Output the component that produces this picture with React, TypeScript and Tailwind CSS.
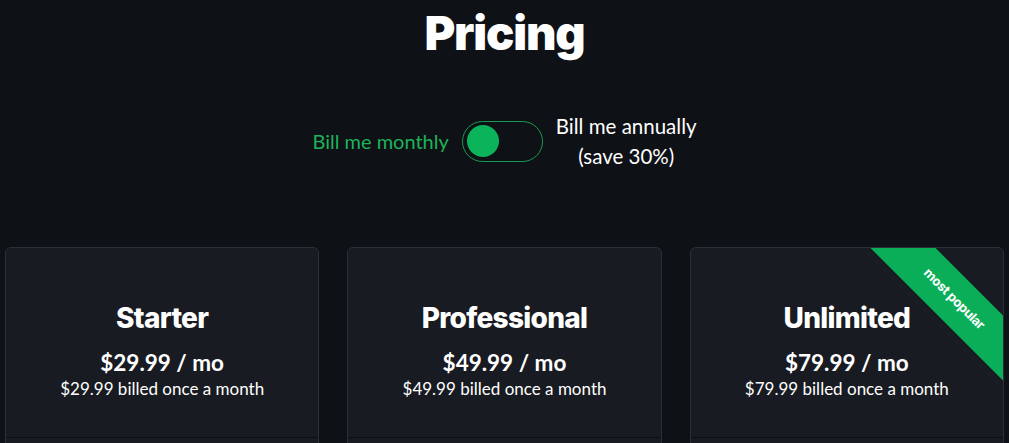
const plans = [
  { name: "Starter", price: "$29.99" },
  { name: "Professional", price: "$49.99" },
  { name: "Unlimited", price: "$79.99", popular: true },
];

function PlanCard(props: { name: string; price: string; popular?: boolean }) {
  const { name, price, popular } = props;
  return (
    <div className="relative overflow-hidden rounded-md border border-[#2b2f36] bg-[#181b21] text-white">
      {popular && (
        <div className="absolute left-[163px] top-[28px] flex h-[46px] w-[200px] rotate-45 items-center justify-center bg-[#0bae58]">
          <span className="font-['Inter',sans-serif] text-[13px] font-bold tracking-tight">most popular</span>
        </div>
      )}
      <div className="flex h-[190px] flex-col items-center border-b border-[#0c0e12] pt-[51px]">
        <h2 className="font-['Inter',sans-serif] text-[28px] leading-[38px] font-extrabold tracking-tight">{name}</h2>
        <p className="mt-[12px] font-['Lato',sans-serif] text-[22.5px] leading-[28px] font-bold">{price} / mo</p>
        <p className="mt-[1px] font-['Lato',sans-serif] text-[17px] leading-[22px]">{price} billed once a month</p>
      </div>
      <div className="h-[60px]" />
    </div>
  );
}

export default function App() {
  return (
    <div className="min-h-screen overflow-hidden bg-[#0e1116]">
      <h1 className="pt-[2px] text-center font-['Inter',sans-serif] text-[47px] leading-[62px] font-black tracking-tight text-white">
        Pricing
      </h1>

      <div className="mt-[47px] flex items-center justify-center gap-[13px] font-['Lato',sans-serif] text-[20px]">
        <span className="text-[#1fb25a]">Bill me monthly</span>
        <div className="flex h-[41px] w-[81px] items-center rounded-full border border-[#1a9c50] px-[4px]">
          <div className="h-[32px] w-[32px] rounded-full bg-[#0bb35a]" />
        </div>
        <span className="text-center text-[20.5px] leading-[30px] text-white">
          Bill me annually
          <br />
          (save 30%)
        </span>
      </div>

      <div className="mt-[76px] grid grid-cols-3 gap-[28px] px-[5px]">
        {plans.map((p) => (
          <PlanCard key={p.name} name={p.name} price={p.price} popular={p.popular} />
        ))}
      </div>
    </div>
  );
}
